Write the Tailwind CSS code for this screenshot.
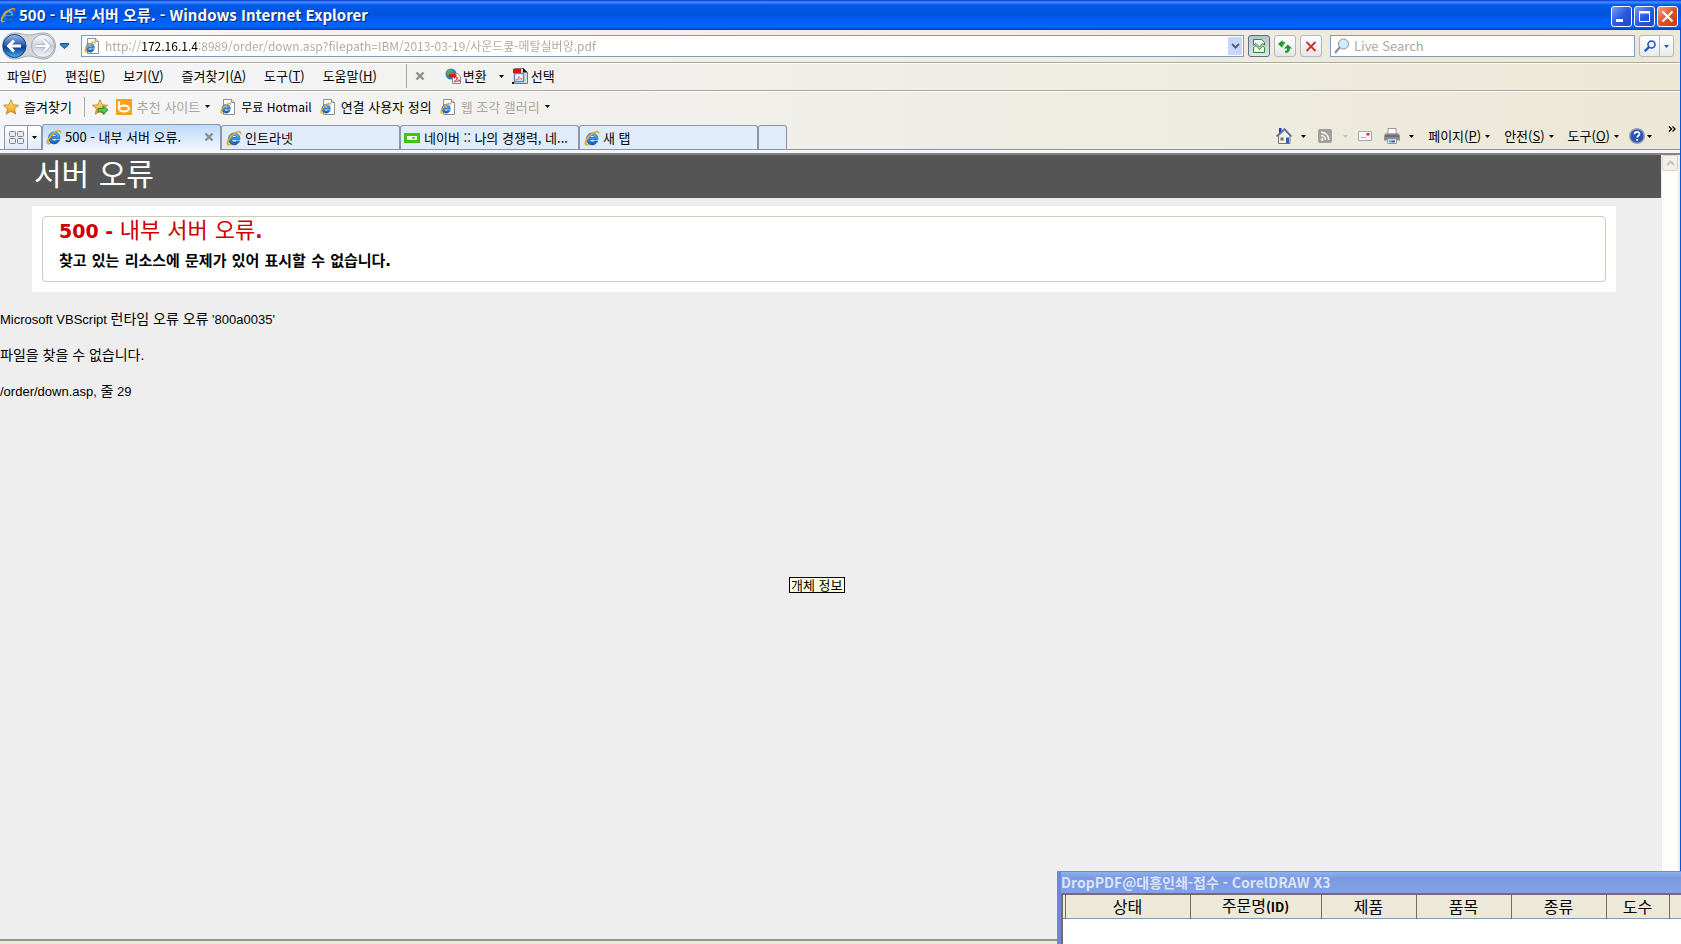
<!DOCTYPE html>
<html lang="ko">
<head>
<meta charset="utf-8">
<title>500 - 내부 서버 오류.</title>
<script src="https://cdn.jsdelivr.net/npm/@tailwindcss/browser@4"></script>
</head>
<body class="relative h-screen overflow-hidden flex flex-col bg-[#ece9d8] font-['Noto_Sans_CJK_KR',sans-serif] text-[13px] leading-4 text-black">

<svg class="absolute size-0" aria-hidden="true">
  <defs>
    <linearGradient id="ieb" x1="0" y1="0" x2="0" y2="1"><stop offset="0" stop-color="#5cc0f8"/><stop offset="1" stop-color="#0a5cc0"/></linearGradient>
    <linearGradient id="star" x1="0" y1="0" x2="0" y2="1"><stop offset="0" stop-color="#ffe98a"/><stop offset="1" stop-color="#f09a10"/></linearGradient>
    <linearGradient id="back" x1="0" y1="0" x2="0" y2="1"><stop offset="0" stop-color="#9dbdea"/><stop offset=".45" stop-color="#2a5cb4"/><stop offset=".55" stop-color="#0c3a94"/><stop offset="1" stop-color="#3fb4f4"/></linearGradient>
    <linearGradient id="fwd" x1="0" y1="0" x2="0" y2="1"><stop offset="0" stop-color="#fdfdfe"/><stop offset=".5" stop-color="#cdd3de"/><stop offset="1" stop-color="#f2f5fa"/></linearGradient>
    <symbol id="ie" viewBox="0 0 16 16">
      <path d="M13.900 9.600H5.600C5.800 11.200 7 12 8.300 12c1 0 1.700-.4 2.200-1h3.100c-.9 2.400-2.900 3.900-5.400 3.900C4.900 14.900 2.500 12.400 2.500 9c0-3.400 2.500-6 5.800-6 3.500 0 5.900 2.600 5.600 6.600zM5.700 7.500h5C10.500 6.200 9.500 5.500 8.200 5.500 6.900 5.500 6 6.200 5.700 7.500z" fill="url(#ieb)" stroke="#0b4ea2" stroke-width=".6"/>
      <path d="M14.700 4.600c.6-1.700.4-3-.6-3.400C11.900.3 7.400 2.900 4.100 6.600.9 10.200-.1 13.900 1.500 15c1 .6 2.600.1 4.400-1-1.500.5-2.700.5-3.200-.1-1-1.200.4-4.200 3-7 2.700-2.900 6-4.800 7.600-4.500.9.200 1.300.9 1.400 2.200z" fill="#f4b322" stroke="#c98510" stroke-width=".3"/>
    </symbol>
    <symbol id="iepage" viewBox="0 0 16 16">
      <path d="M3.500.5h8l3 3v12h-11z" fill="#fff" stroke="#8e8e98"/><path d="M11.500.5v3h3" fill="#ddd" stroke="#8e8e98"/>
      <use href="#ie" x="0" y="3" width="12" height="12"/>
    </symbol>
    <symbol id="fav" viewBox="0 0 16 16"><path d="M8 .8l2.200 5 5.300.5-4 3.600 1.200 5.200L8 12.300l-4.700 2.800 1.200-5.200-4-3.600 5.300-.5z" fill="url(#star)" stroke="#c07a10" stroke-width=".8"/></symbol>
    <symbol id="tri" viewBox="0 0 5 3"><path d="M0 0h5L2.500 3z" fill="currentColor"/></symbol>
    <symbol id="x" viewBox="0 0 10 10"><path d="M1.500 1.500l7 7M8.500 1.500l-7 7" stroke="currentColor" stroke-width="2.400"/></symbol>
  </defs>
</svg>

<header class="h-[30px] shrink-0 flex items-center pr-[3px] bg-[linear-gradient(#0831d9_0,#3f94ff_2px,#0058e8_5px,#0053e0_14px,#0064ff_24px,#0060fa_27px,#003cc8_30px)]">
  <svg class="size-4 shrink-0" aria-hidden="true"><use href="#ie"/></svg>
  <h1 class="ml-[3px] flex-1 whitespace-nowrap text-[15px] font-bold text-white [text-shadow:1px_1px_0_#0a246a]">500 - 내부 서버 오류. - Windows Internet Explorer</h1>
  <div class="flex gap-0.5 pt-0.5">
    <button aria-label="최소화" class="size-[21px] rounded-[3px] border border-white bg-linear-to-br from-[#7a9bf0] via-[#2a5ae0] to-[#1a48c8]"><svg viewBox="0 0 19 19" class="size-full"><path d="M4 12h7v3H4z" fill="#fff"/></svg></button>
    <button aria-label="최대화" class="size-[21px] rounded-[3px] border border-white bg-linear-to-br from-[#7a9bf0] via-[#2a5ae0] to-[#1a48c8]"><svg viewBox="0 0 19 19" class="size-full"><path d="M4.500 5.500h10v9h-10z" fill="none" stroke="#fff"/><path d="M4 4h11v2.500H4z" fill="#fff"/></svg></button>
    <button aria-label="닫기" class="size-[21px] rounded-[3px] border border-white bg-linear-to-br from-[#f0a088] via-[#e05028] to-[#c83808]"><svg viewBox="0 0 19 19" class="size-full"><path d="M4.500 4.500l10 10M14.500 4.500l-10 10" stroke="#fff" stroke-width="2.200"/></svg></button>
  </div>
</header>

<div class="flex-1 min-h-0 flex flex-col border-r border-[#0054e3]">
<div class="shrink-0 bg-linear-to-r from-[#f5f6f9] via-[#f0efea] via-45% to-[#ece8d6]">

  <form class="h-[33px] flex items-center pl-0.5 pr-1.5 border-b border-[#aca899]">
    <div class="relative w-[54px] h-7 shrink-0">
      <svg viewBox="0 0 54 28" class="size-full" aria-hidden="true">
        <path d="M13 1C5 1 .5 7 .5 14S5 27 13 27c6 0 8-3 14-3s8 3 14 3c8 0 12.500-6 12.500-13S49 1 41 1c-6 0-8 2-14 2S19 1 13 1z" fill="#d4d6da" stroke="#a9abb0"/>
        <circle cx="12.500" cy="14" r="11.500" fill="url(#back)" stroke="#1b3f80"/>
        <path d="M19 14H7M12 8.500L6.500 14l5.500 5.500" fill="none" stroke="#fff" stroke-width="3"/>
        <circle cx="41" cy="14" r="11.500" fill="url(#fwd)" stroke="#a2a8b4"/>
        <path d="M34 14h12M41.500 8.500L47 14l-5.500 5.500" fill="none" stroke="#9aa2b0" stroke-width="4"/>
        <path d="M34 14h12M41.500 8.500L47 14l-5.500 5.500" fill="none" stroke="#fff" stroke-width="2.600"/>
      </svg>
      <button type="button" aria-label="뒤로" class="absolute inset-y-0 left-0 w-1/2"></button>
      <button type="button" aria-label="앞으로" class="absolute inset-y-0 right-0 w-1/2"></button>
    </div>
    <button type="button" aria-label="최근 페이지" class="ml-1 mr-3 w-[9px] shrink-0"><svg viewBox="0 0 9 6" class="w-full"><path d="M.5.500h8v1.500l-4 3.500-4-3.500z" fill="#2a86c8" stroke="#124a80"/></svg></button>
    <div class="flex-1 h-[22px] flex items-center border border-[#7f9db9] bg-white pl-0.5">
      <svg class="size-4 shrink-0" aria-hidden="true"><use href="#iepage"/></svg>
      <input aria-label="주소" class="ml-[5px] flex-1 min-w-0 h-5 pb-0.5 text-xs outline-none text-transparent bg-clip-text bg-[linear-gradient(90deg,#aca899_36px,#000_36px,#000_94px,#aca899_94px)]" value="http://172.16.1.4:8989/order/down.asp?filepath=IBM/2013-03-19/사운드쿺-메탈실버양.pdf">
      <button type="button" aria-label="주소 목록" class="w-[14px] h-[18px] mr-px flex items-center justify-center bg-[#c8d6fb]"><svg viewBox="0 0 9 6" class="w-[9px]"><path d="M1 1l3.500 3.500L8 1" fill="none" stroke="#4d6185" stroke-width="2"/></svg></button>
    </div>
    <div class="flex gap-1 ml-1 mr-2">
      <button type="button" aria-label="호환성 보기" class="size-[22px] flex items-center justify-center rounded-[3px] border border-[#5c6f7c] bg-linear-to-b from-[#b4c2ca] to-[#dfe8ec]"><svg viewBox="0 0 12 14" class="w-3"><path d="M.5 6V.5h8l3 3V6l-2-1.500L6.500 8 3 4.500z" fill="#eef8ec" stroke="#2f8a2a"/><path d="M.5 8.500L3 6.500l3.500 4 3-3.500 2 1.500v5H.5z" fill="#eef8ec" stroke="#2f8a2a"/></svg></button>
      <button type="button" aria-label="새로 고침" class="size-[22px] flex items-center justify-center rounded-[3px] border border-[#b4b8bc] bg-linear-to-b from-white to-[#e4e6e6]"><svg viewBox="0 0 14 14" class="w-3.5"><path d="M4.500 1L0 5l4.500 4V6.500h1.200V4.500H7V3H4.500z" fill="#22962a"/><path d="M9.800 5.500L14 9.500h-2.300v2.200l-2.200 2H7v-1.900h1.500l.5-.5V9.500H6z" fill="#22962a"/></svg></button>
      <button type="button" aria-label="중지" class="size-[22px] flex items-center justify-center rounded-[3px] border border-[#b4b8bc] bg-linear-to-b from-white to-[#e4e6e6]"><svg viewBox="0 0 14 14" class="w-3.5"><path d="M2.500 3l9 9M11.500 3l-9 9" stroke="#c8363a" stroke-width="2"/></svg></button>
    </div>
    <div class="w-[305px] h-[22px] flex items-center border border-[#7f9db9] bg-white pl-[3px]">
      <svg viewBox="0 0 16 16" class="size-4 shrink-0" aria-hidden="true"><path d="M1 15l5-6" stroke="#8a8a8a" stroke-width="2"/><circle cx="9.500" cy="6" r="5" fill="#d4ecfa" stroke="#8494a4"/></svg>
      <input aria-label="검색" placeholder="Live Search" class="ml-1 flex-1 min-w-0 h-5 pb-0.5 outline-none placeholder:text-[#aca899]">
    </div>
    <div class="ml-1 h-[22px] flex rounded-[3px] border border-[#b4b8bc] bg-linear-to-b from-white to-[#e8ebee]">
      <button aria-label="검색 실행" class="w-5 flex items-center justify-center border-r border-[#b4b8bc]"><svg viewBox="0 0 12 12" class="size-3"><path d="M.8 11.200L5 7" stroke="#1c56c8" stroke-width="2.400"/><circle cx="7.500" cy="4.500" r="3.500" fill="none" stroke="#1c56c8" stroke-width="1.600"/></svg></button>
      <button type="button" aria-label="검색 옵션" class="w-[13px] flex items-center justify-center text-[#1c56c8]"><svg class="w-[5px] h-[3px]"><use href="#tri"/></svg></button>
    </div>
  </form>

  <nav aria-label="메뉴" class="h-7 flex items-center border-t border-t-white border-b border-b-[#aca899] pl-[7px] pb-0.5">
    <div class="flex gap-[18px]">
      <button>파일(<u>F</u>)</button>
      <button>편집(<u>E</u>)</button>
      <button>보기(<u>V</u>)</button>
      <button>즐겨찾기(<u>A</u>)</button>
      <button>도구(<u>T</u>)</button>
      <button>도움말(<u>H</u>)</button>
    </div>
    <div class="ml-[29px] w-px h-6 bg-[#aca899]"></div>
    <button aria-label="도구 모음 닫기" class="ml-2 text-[#8c8c8c]"><svg class="size-[10px]"><use href="#x"/></svg></button>
    <button class="ml-5 flex items-center gap-0.5">
      <svg viewBox="0 0 16 16" class="size-4" aria-hidden="true"><circle cx="6" cy="6" r="5.500" fill="#3c78c8"/><path d="M1 4c2-4 6-3 7-2L6 6 3 8zM7 8l3-2 1 2-3 3z" fill="#4ab04a"/><path d="M7.500 5.500h5l3 3v7h-8z" fill="#fff" stroke="#888"/><path d="M4 6h5V4.500L12 8l-3 3V9.500H4z" fill="#e01818"/><path d="M9 14c2-1 3-3 3-5 0 2 1 3 3 4-2 0-4 0-6 1z" fill="none" stroke="#d03030"/></svg>
      변환
      <svg class="ml-2.5 w-[5px] h-[3px]"><use href="#tri"/></svg>
    </button>
    <button class="ml-2 flex items-center gap-[3px]">
      <svg viewBox="0 0 16 16" class="size-4" aria-hidden="true"><path d="M2.500.5h9l4 4v11h-13z" fill="#d8dce4" stroke="#777"/><path d="M11 0l4.500 4.500H11z" fill="#111"/><path d="M2.500 5.500h9v8h-9z" fill="#fff" stroke="#4a8ad8" stroke-width="1.500"/><path d="M1 1h8v4H1z" fill="#e01010"/><path d="M4 12c2-1 3-3 3-4 0 1 1 2 3 3-2 0-4 0-6 1z" fill="none" stroke="#e07070"/><path d="M0 14h2v2H0z" fill="#111"/></svg>
      선택
    </button>
  </nav>

  <nav aria-label="즐겨찾기 모음" class="h-8 flex items-center border-t border-white pl-[3px] pb-0.5 whitespace-nowrap">
    <button class="flex items-center gap-[5px]"><svg class="size-4" aria-hidden="true"><use href="#fav"/></svg>즐겨찾기</button>
    <div class="ml-3 mr-[7px] w-px h-5 bg-[#aca899]"></div>
    <button aria-label="즐겨찾기 모음에 추가" class="mr-2"><svg viewBox="0 0 16 16" class="size-4"><use href="#fav"/><path d="M6 9.500h5V7l5 4-5 4.500V13H6z" fill="#58c848" stroke="#1e7a1e" stroke-width=".8"/></svg></button>
    <a href="#" class="flex items-center gap-[5px] text-[#aca899]"><svg viewBox="0 0 16 16" class="size-4" aria-hidden="true"><path d="M0 0h16v16H0z" fill="#f9a11b"/><path d="M3 2.500v7" stroke="#fff" stroke-width="2.200"/><ellipse cx="8" cy="9.500" rx="5" ry="3" fill="none" stroke="#fff" stroke-width="2.200"/></svg>추천 사이트<svg class="w-[5px] h-[3px] text-black"><use href="#tri"/></svg></a>
    <a href="#" class="ml-2.5 flex items-center gap-[5px] text-xs"><svg class="size-4" aria-hidden="true"><use href="#iepage"/></svg>무료 Hotmail</a>
    <a href="#" class="ml-2 flex items-center gap-[5px]"><svg class="size-4" aria-hidden="true"><use href="#iepage"/></svg>연결 사용자 정의</a>
    <a href="#" class="ml-2 flex items-center gap-[5px] text-[#aca899]"><svg class="size-4" aria-hidden="true"><use href="#iepage"/></svg>웹 조각 갤러리<svg class="w-[5px] h-[3px] text-black"><use href="#tri"/></svg></a>
  </nav>

  <div class="h-[27px] flex items-end justify-between border-b border-[#8a94a6]">
    <div class="flex items-end pl-1 whitespace-nowrap">
      <div class="h-6 flex rounded-t-[3px] border border-b-0 border-[#8f96a3] bg-linear-to-b from-white to-[#e0ecfa]">
        <button aria-label="빠른 탭" class="w-[23px] flex items-center justify-center border-r border-[#8f96a3]"><svg viewBox="0 0 15 13" class="w-[15px]"><g fill="#e8ebf2" stroke="#7c8494"><rect x=".5" y=".5" width="6" height="5" rx="1"/><rect x="8.500" y=".5" width="6" height="5" rx="1"/><rect x=".5" y="7.500" width="6" height="5" rx="1"/><rect x="8.500" y="7.500" width="6" height="5" rx="1"/></g></svg></button>
        <button aria-label="탭 목록" class="w-[13px] flex items-center justify-center"><svg class="w-[5px] h-[3px]"><use href="#tri"/></svg></button>
      </div>
      <div class="w-[179px] h-[26px] -mb-px flex items-center rounded-t-[3px] border border-b-0 border-[#8f96a3] bg-linear-to-b from-[#bcd9fb] to-[#f2f7fe] pl-[3px] pr-1.5 pb-px">
        <button class="flex-1 flex items-center gap-[3px]"><svg class="size-4" aria-hidden="true"><use href="#ie"/></svg>500 - 내부 서버 오류.</button>
        <button aria-label="탭 닫기" class="text-[#8c8c8c]"><svg class="size-[10px]"><use href="#x"/></svg></button>
      </div>
      <button class="w-[179px] h-6 flex items-center gap-[3px] rounded-t-[3px] border border-b-0 border-[#8f96a3] bg-[#e1ecfa] pl-1"><svg class="size-4" aria-hidden="true"><use href="#ie"/></svg>인트라넷</button>
      <button class="w-[179px] h-6 flex items-center gap-1 rounded-t-[3px] border border-b-0 border-[#8f96a3] bg-[#e1ecfa] pl-[3px]"><svg viewBox="0 0 16 16" class="size-4" aria-hidden="true"><path d="M0 3h16v10H0z" fill="#3fc60c"/><path d="M3 6h10v4H3z" fill="#fff"/><path d="M7.500 7h4l-2 2.500z" fill="#3fc60c"/></svg>네이버 :: 나의 경쟁력, 네...</button>
      <button class="w-[179px] h-6 flex items-center gap-[3px] rounded-t-[3px] border border-b-0 border-[#8f96a3] bg-[#e1ecfa] pl-1"><svg class="size-4" aria-hidden="true"><use href="#ie"/></svg>새 탭</button>
      <button aria-label="새 탭 열기" class="w-[29px] h-6 rounded-t-[3px] border border-b-0 border-[#8f96a3] bg-[#e1ecfa]"></button>
    </div>
    <div class="flex items-center pb-[3px] whitespace-nowrap">
      <button aria-label="홈" class="flex items-center gap-[9px]"><svg viewBox="0 0 16 16" class="size-4"><path d="M3 0h2.500v5H3z" fill="#2030c0"/><path d="M2.500 8L8.500 2l5.500 6v7.500h-11.500z" fill="#f2f0ea" stroke="#777"/><path d="M.5 8.500L8.500 1l7 7.500" fill="none" stroke="#5a6ea8" stroke-width="1.600"/><path d="M10 9.500h3v6h-3z" fill="#2c64b8"/><path d="M4.500 9.500h3v3h-3z" fill="#7a6a5a"/></svg><svg class="w-[5px] h-[3px]"><use href="#tri"/></svg></button>
      <button aria-label="피드" class="ml-3 flex items-center gap-[11px] text-[#c4c0b0]"><svg viewBox="0 0 14 14" class="size-3.5"><rect width="14" height="14" rx="2" fill="#a09f98"/><circle cx="4" cy="10.500" r="1.300" fill="#fff"/><path d="M3 6.500a4.500 4.500 0 014.500 4.500M3 3.200A7.800 7.800 0 0110.800 11" fill="none" stroke="#fff" stroke-width="1.400"/></svg><svg class="w-[5px] h-[3px]"><use href="#tri"/></svg></button>
      <button aria-label="메일 읽기" class="ml-2.5"><svg viewBox="0 0 14 10" class="w-3.5"><path d="M.5.500h13v9H.5z" fill="#f6f6fa" stroke="#a8a8b0"/><path d="M8.500 2h3v2.500h-3z" fill="#d83a2a"/><path d="M2.500 6.500h6" stroke="#b4b4bc"/></svg></button>
      <button aria-label="인쇄" class="ml-3 flex items-center gap-[9px]"><svg viewBox="0 0 16 16" class="size-4"><path d="M4 .5h8V6H4z" fill="#fff" stroke="#999"/><path d="M1 5.500h14l1 3v4H0v-4z" fill="#8c8c94"/><path d="M1 8h14" stroke="#4c4c54"/><path d="M3.500 11h9v4.500h-9z" fill="#fff" stroke="#999"/><path d="M5 12.500h3v2H5z" fill="#28a0d0"/><path d="M8 12.500h3v2H8z" fill="#3454b8"/></svg><svg class="w-[5px] h-[3px]"><use href="#tri"/></svg></button>
      <button class="ml-3.5 flex items-center gap-1"><span>페이지(<u>P</u>)</span><svg class="w-[5px] h-[3px]"><use href="#tri"/></svg></button>
      <button class="ml-3.5 flex items-center gap-1"><span>안전(<u>S</u>)</span><svg class="w-[5px] h-[3px]"><use href="#tri"/></svg></button>
      <button class="ml-3.5 flex items-center gap-1"><span>도구(<u>O</u>)</span><svg class="w-[5px] h-[3px]"><use href="#tri"/></svg></button>
      <button aria-label="도움말" class="ml-2.5 flex items-center gap-0.5"><svg viewBox="0 0 16 16" class="size-4"><circle cx="8" cy="8" r="7.300" fill="#2d55b4" stroke="#9aa2b0" stroke-width="1.400"/><path d="M5.500 6.300C5.500 3 10.700 3.200 10.500 6c0 1.700-2.400 1.800-2.400 3.600" fill="none" stroke="#fff" stroke-width="1.700"/><path d="M7.200 10.900H9v1.800H7.200z" fill="#fff"/></svg><svg class="w-[5px] h-[3px]"><use href="#tri"/></svg></button>
      <button aria-label="더 보기" class="ml-4 mr-1 mb-3.5"><svg viewBox="0 0 8 6" class="w-2"><path d="M1 .5L3.500 3 1 5.500M4.500.5L7 3 4.500 5.500" fill="none" stroke="#000" stroke-width="1.300"/></svg></button>
    </div>
  </div>
  <div class="h-[5px] bg-[#f2f5fa] border-b-2 border-[#86837a]"></div>
</div>

<div class="relative flex-1 min-h-0 flex">
  <main class="flex-1 bg-[#eeeeee]">
    <div class="h-[43px] flex items-center bg-[#555555] pl-[34px] pb-1 font-['DejaVu_Sans','Noto_Sans_CJK_KR',sans-serif] text-[30px] leading-8 text-white">서버 오류</div>
    <section class="mt-2 ml-8 mr-[45px] bg-white p-[10px]">
      <div class="h-[66px] rounded-[4px] border border-[#ccccbb] pl-4 pt-0.5 font-['DejaVu_Sans','Noto_Sans_CJK_KR',sans-serif]">
        <h2 class="h-6 text-[19px] leading-6 font-bold text-[#cc0000]">500 - <span class="text-[22px] font-normal">내부 서버 오류</span>.</h2>
        <h3 class="mt-2 text-[15px] leading-5 font-bold">찾고 있는 리소스에 문제가 있어 표시할 수 없습니다.</h3>
      </div>
    </section>
    <div class="mt-[17px] flex flex-col gap-4 font-['Liberation_Sans','Noto_Sans_CJK_KR',sans-serif] leading-5">
      <p class="h-5">Microsoft VBScript <span class="text-sm leading-5">런타임 오류 오류</span> '800a0035'</p>
      <p class="h-5 text-sm leading-5">파일을 찾을 수 없습니다.</p>
      <p class="h-5">/order/down.asp, <span class="text-sm leading-5">줄</span> 29</p>
    </div>
  </main>
  <div class="w-[19px] shrink-0 bg-[#fdfdfa] border-l border-r-2 border-[#eeede5]">
    <button aria-label="위로 스크롤" class="size-4 flex items-center justify-center rounded-[2px] border border-[#d8d6c8] bg-[#f1f0ea]"><svg viewBox="0 0 9 6" class="w-[9px]"><path d="M1 5l3.500-3.500L8 5" fill="none" stroke="#c4c3b8" stroke-width="2"/></svg></button>
  </div>
  <div role="tooltip" class="absolute left-[789px] top-[422px] h-4 flex items-center border border-black bg-[#ffffe1] pl-px pr-0.5 pb-px whitespace-nowrap">개체 정보</div>
</div>
<footer class="h-[5px] shrink-0 border-t-2 border-[#96948a] bg-[#ece9d8]"></footer>
</div>

<section aria-label="CorelDRAW X3" class="absolute right-0 bottom-0 w-[624px] h-[73px] flex flex-col border-l-4 border-t border-[#6f86dc] bg-[#7b97e0]">
  <h2 class="h-[21px] shrink-0 bg-linear-to-b from-[#8fb0f0] via-[#7b97e0] via-30% to-[#82a2e8] text-sm leading-[21px] font-bold text-[#d8e4f8] whitespace-nowrap">DropPDF@대흥인쇄-접수 - CorelDRAW X3</h2>
  <div class="flex-1 bg-white border-l-2 border-t-2 border-[#716f64]">
    <table class="w-full table-fixed border-collapse bg-[#ece9d8] text-base leading-5">
      <colgroup><col class="w-[2px]"><col class="w-[125px]"><col class="w-[131px]"><col class="w-[95px]"><col class="w-[95px]"><col class="w-[95px]"><col class="w-[63px]"><col></colgroup>
      <thead><tr class="border-b border-[#7f9db9]">
        <th class="border-r border-[#716f64] p-0"></th>
        <th class="border-r border-[#716f64] p-0 pb-px font-normal">상태</th>
        <th class="border-r border-[#716f64] p-0 pb-px font-normal">주문명<span class="text-[13px] leading-5 font-bold">(ID)</span></th>
        <th class="border-r border-[#716f64] p-0 pb-px font-normal">제품</th>
        <th class="border-r border-[#716f64] p-0 pb-px font-normal">품목</th>
        <th class="border-r border-[#716f64] p-0 pb-px font-normal">종류</th>
        <th class="border-r border-[#716f64] p-0 pb-px font-normal">도수</th>
        <th class="p-0"></th>
      </tr></thead>
    </table>
  </div>
</section>
</body>
</html>
